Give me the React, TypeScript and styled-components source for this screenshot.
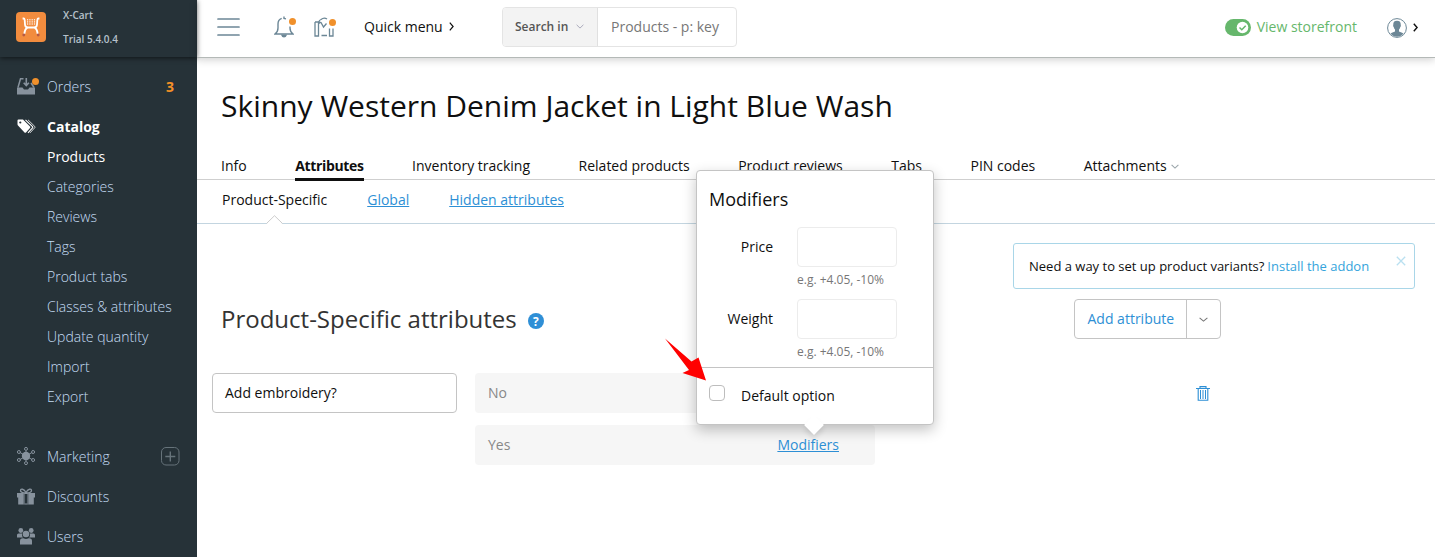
import React from 'react';
import styled, { createGlobalStyle, css } from 'styled-components';

const Global = createGlobalStyle`
  *, *::before, *::after { box-sizing: border-box; }
  body { margin: 0; background: #fff; overflow: hidden; }
  body, button, input { font-family: "Open Sans", "Noto Sans", sans-serif; font-size: 14px; color: #0f0f0f; }
  svg { display: block; flex: none; }
`;

const Page = styled.div`
  display: flex;
  width: 1435px;
  height: 557px;
  overflow: hidden;
`;

/* ---------- sidebar ---------- */
const Sidebar = styled.aside`
  flex: none;
  width: 197px;
  background: #263238;
`;
const Brand = styled.div`
  display: flex;
  align-items: flex-start;
  height: 57px;
  padding: 12px 0 0 16px;
  background: #263238;
  box-shadow: 0 1px 5px rgba(0, 0, 0, 0.6);
`;
const Logo = styled.div`
  display: flex;
  justify-content: center;
  align-items: center;
  width: 30px;
  height: 30px;
  border-radius: 4px;
  background: #f28c3e;
`;
const BrandText = styled.div`
  margin: -9px 0 0 17px;
  font-size: 10px;
  font-weight: 600;
  line-height: 24px;
  color: #b6c1cb;
`;
const Nav = styled.nav`
  display: flex;
  flex-direction: column;
  padding-top: 9px;
`;
const NavItem = styled.a<{ $active?: boolean; $gap?: boolean }>`
  display: flex;
  align-items: center;
  height: 40px;
  margin-top: ${(p) => (p.$gap ? '19px' : 0)};
  padding: 0 17px 0 16px;
  font-weight: ${(p) => (p.$active ? 700 : 300)};
  color: ${(p) => (p.$active ? '#fff' : '#c5ddf5')};
`;
const NavIcon = styled.span`
  position: relative;
  display: flex;
  justify-content: center;
  width: 20px;
  margin-right: 11px;
`;
const NavLabel = styled.span`
  flex: 1;
`;
const Count = styled.span`
  margin-right: 6px;
  font-weight: 700;
  color: #f59127;
`;
const SubNav = styled.div`
  display: flex;
  flex-direction: column;
  padding: 1px 0 0 47px;
`;
const SubItem = styled.a<{ $active?: boolean }>`
  height: 30px;
  line-height: 20px;
  font-weight: ${(p) => (p.$active ? 400 : 300)};
  color: ${(p) => (p.$active ? '#fff' : '#c5ddf5')};
`;
const Dot = styled.i<{ $top: number; $right: number }>`
  position: absolute;
  top: ${(p) => p.$top}px;
  right: ${(p) => p.$right}px;
  width: 7px;
  height: 7px;
  border-radius: 50%;
  background: #f0902b;
`;

/* ---------- header ---------- */
const Body = styled.div`
  flex: 1;
  min-width: 0;
`;
const Header = styled.header`
  display: flex;
  align-items: center;
  height: 58px;
  padding: 0 17px 3px 20px;
  border-bottom: 1px solid #b4b9b7;
  box-shadow: 0 2px 8px rgba(0, 0, 0, 0.18);
`;
const HeaderIcon = styled.span<{ $ml: number }>`
  position: relative;
  margin-left: ${(p) => p.$ml}px;
`;
const QuickMenu = styled.a`
  display: flex;
  align-items: center;
  gap: 6px;
  width: 91px;
  margin-left: 29px;
  padding-bottom: 2px;
`;
const Search = styled.div`
  display: flex;
  width: 235px;
  height: 40px;
  margin-left: 47px;
  border: 1px solid #e4e4e4;
  border-radius: 4px;
  overflow: hidden;
`;
const SearchIn = styled.div`
  display: flex;
  align-items: center;
  gap: 8px;
  width: 95px;
  padding: 0 0 1px 12px;
  border-right: 1px solid #e0e0e0;
  background: #f3f3f3;
  font-size: 12px;
  font-weight: 600;
  color: #555;
`;
const SearchField = styled.div`
  flex: 1;
  padding-left: 13px;
  line-height: 37px;
  color: #777;
`;
const Storefront = styled.a`
  display: flex;
  align-items: center;
  gap: 6px;
  margin-left: auto;
  margin-right: 30px;
  color: #66b76c;
`;
const StorefrontLabel = styled.span`
  padding-bottom: 1px;
`;
const Account = styled.div`
  display: flex;
  align-items: center;
  gap: 6px;
  padding-top: 1px;
`;

/* ---------- page title and tabs ---------- */
const Title = styled.h1`
  margin: 0;
  padding: 27px 0 0 24px;
  height: 96px;
  font-size: 30px;
  line-height: 42px;
  font-weight: 400;
`;
const Tabs = styled.div`
  display: flex;
  gap: 48.5px;
  height: 26px;
  padding-left: 24px;
  border-bottom: 1px solid #cfcfcf;
`;
const Tab = styled.a<{ $active?: boolean }>`
  display: flex;
  align-items: center;
  gap: 4px;
  height: 27px;
  padding-bottom: 3px;
  line-height: 20px;
  white-space: nowrap;
  ${(p) =>
    p.$active &&
    css`
      font-weight: 700;
      letter-spacing: -0.34px;
      border-bottom: 3px solid #0f0f0f;
      padding-bottom: 0;
    `}
`;
const SubTabs = styled.div`
  display: flex;
  gap: 40px;
  height: 44px;
  padding: 10px 0 0 25px;
  line-height: 20px;
  border-bottom: 1px solid #c3d5e0;
`;
const SubTab = styled.a<{ $active?: boolean }>`
  position: relative;
  color: ${(p) => (p.$active ? '#0f0f0f' : '#2d8fd5')};
  text-decoration: ${(p) => (p.$active ? 'none' : 'underline')};
`;
const Caret = styled.svg`
  position: absolute;
  left: 44px;
  top: 25px;
`;

/* ---------- content ---------- */
const Notice = styled.div`
  display: flex;
  align-items: center;
  width: 402px;
  height: 46px;
  margin: 19px 20px 0 auto;
  padding: 0 8px 0 15px;
  border: 1px solid #a9d6e8;
  border-radius: 3px;
  font-size: 13px;
  white-space: nowrap;
  a { margin-left: 3px; color: #35a4dc; }
  svg { margin: -11px 0 0 auto; }
`;
const SectionHead = styled.div`
  display: flex;
  align-items: center;
  height: 40px;
  margin-top: 10px;
  padding: 0 214px 0 24px;
`;
const SectionTitle = styled.h2`
  margin: 0 12px 0 0;
  padding-bottom: 2px;
  font-size: 24px;
  font-weight: 400;
  color: #333;
`;
const Help = styled.span`
  display: flex;
  align-items: center;
  justify-content: center;
  width: 16px;
  height: 16px;
  margin: 4px 0 0 -1px;
  border-radius: 50%;
  background: #2f8fd6;
  font-size: 12px;
  font-weight: 700;
  color: #fff;
`;
const SplitButton = styled.div`
  display: flex;
  width: 147px;
  height: 40px;
  margin-left: auto;
  border: 1px solid #c4c4c4;
  border-radius: 4px;
`;
const SplitMain = styled.a`
  width: 112px;
  padding-left: 12.5px;
  border-right: 1px solid #c4c4c4;
  line-height: 38px;
  font-weight: 500;
  color: #2d8fd5;
`;
const SplitMore = styled.span`
  display: flex;
  flex: 1;
  align-items: center;
  justify-content: center;
`;
const Attribute = styled.div`
  display: flex;
  align-items: flex-start;
  margin-top: 34px;
  padding: 0 225px 0 15px;
`;
const NameInput = styled.div`
  width: 245px;
  height: 40px;
  padding-left: 12px;
  border: 1px solid #c4c4c4;
  border-radius: 4px;
  line-height: 38px;
`;
const Options = styled.div`
  display: flex;
  flex-direction: column;
  gap: 12px;
  margin-left: 18px;
`;
const Option = styled.div`
  position: relative;
  display: flex;
  justify-content: space-between;
  align-items: center;
  width: 400px;
  height: 40px;
  padding: 0 36px 2px 13px;
  border-radius: 4px;
  background: #f6f6f6;
  color: #888;
`;
const ModLink = styled.a`
  color: #2d8fd5;
  text-decoration: underline;
`;
const Remove = styled.span`
  margin: 13px 0 0 auto;
`;

/* ---------- modifiers popover ---------- */
const Popover = styled.div`
  position: absolute;
  z-index: 2;
  left: 221px;
  bottom: 40px;
  width: 238px;
  height: 255px;
  border: 1px solid #c4c4c4;
  border-radius: 4px;
  background: #fff;
  color: #0f0f0f;
  box-shadow: 0 5px 14px rgba(0, 0, 0, 0.24);
`;
const PopTitle = styled.div`
  height: 56px;
  padding: 15px 0 0 12px;
  font-size: 18px;
  line-height: 26px;
`;
const Field = styled.div`
  display: flex;
  height: 72px;
`;
const FieldLabel = styled.label`
  width: 76px;
  line-height: 40px;
  text-align: right;
`;
const FieldBody = styled.div`
  margin-left: 24px;
`;
const FieldInput = styled.div`
  width: 100px;
  height: 40px;
  border: 1px solid #ececec;
  border-radius: 4px;
`;
const Hint = styled.div`
  margin-top: 5px;
  font-size: 12px;
  line-height: 16px;
  color: #777;
`;
const DefaultRow = styled.div`
  display: flex;
  height: 57px;
  margin-top: -4px;
  padding: 17px 0 0 12px;
  border-top: 1px solid #c4c4c4;
  gap: 16px;
`;
const Checkbox = styled.span`
  width: 16px;
  height: 16px;
  border: 1px solid #bdbdbd;
  border-radius: 4px;
`;
const DefaultLabel = styled.span`
  line-height: 22px;
`;
const Tip = styled.i`
  position: absolute;
  left: 110px;
  bottom: -8px;
  width: 14px;
  height: 14px;
  background: #fff;
  transform: rotate(45deg);
  box-shadow: 3px 3px 5px rgba(0, 0, 0, 0.1);
`;
const Pointer = styled.svg`
  position: absolute;
  left: -34px;
  top: 166px;
`;

const Chevron = ({ w, h, color, sw = 1.1 }: { w: number; h: number; color: string; sw?: number }) => (
  <svg width={w} height={h} viewBox={`0 0 ${w} ${h}`} fill="none" stroke={color} strokeWidth={sw}>
    {w > h ? <path d={`M.6 .8 L${w / 2} ${h - 0.9} L${w - 0.6} .8`} /> : <path d={`M.8 .7 L${w - 0.9} ${h / 2} L.8 ${h - 0.7}`} />}
  </svg>
);

const CartLogo = () => (
  <svg width="20" height="20" viewBox="0 0 20 20" fill="none" stroke="#fff">
    <path d="M1.600 1.500h1c.9 0 1 .6 1.100 1.600l.3 4.400q.2 3 2.800 3h6.400q2.600 0 2.800-3l.3-4.400c.1-1 .2-1.600 1.100-1.600h1" strokeWidth="1.800" />
    <path d="M6.500 10.500Q4 11.500 3.300 17M13.500 10.500q2.500 1 3.200 6.500" strokeWidth="1.900" />
    <g fill="#fff" stroke="none">
      {[2.2, 4.3, 6.4].map((y) => [6, 8.300, 10.600, 12.900].map((x) => <rect key={`${x}-${y}`} x={x} y={y} width="1.200" height="1.200" />))}
    </g>
    <circle cx="2.800" cy="18" r="1.400" fill="#b65a45" stroke="none" />
    <circle cx="17.200" cy="18" r="1.400" fill="#b65a45" stroke="none" />
  </svg>
);

const OrdersIcon = () => (
  <svg width="18" height="17" viewBox="0 0 18 17">
    <path d="M0 9.500h5.500l1.500 2h4l1.500-2H18v7H0z" fill="#87929d" />
    <path d="M1 9.500 3.500.8h3M14 5l3 4.500" fill="none" stroke="#87929d" strokeWidth="1.500" />
    <path d="M9.300 0v6.500M6.700 4.800 9.300 7.500l2.600-2.700" fill="none" stroke="#87929d" strokeWidth="1.600" />
  </svg>
);
const TagsIcon = () => (
  <svg width="19" height="15" viewBox="0 0 19 15">
    <path d="M.500 1.500Q.500.500 1.500.500H6L13 7.500q.7.800 0 1.500L9 13.500q-.8.700-1.500 0L1 6.500Q.500 6 .5 5z" fill="#fff" />
    <circle cx="3.300" cy="3.500" r="1.100" fill="#263238" />
    <path d="M8.500 .8 15.500 7.700q.6.600 0 1.200L11 13.900" fill="none" stroke="#fff" strokeWidth="1.100" />
    <path d="M11 .8 17.800 7.500q.6.600 0 1.200L13 13.900" fill="none" stroke="#fff" strokeWidth=".8" />
  </svg>
);
const MarketingIcon = () => (
  <svg width="18" height="18" viewBox="0 0 18 18" fill="none" stroke="#87929d">
    <circle cx="9" cy="9" r="4.200" fill="#87929d" stroke="none" />
    <path d="M9 4v10M3 5.500l12 7M3 12.500l12-7" />
    {[[9, 1.900], [9, 16.100], [1.900, 5], [16.100, 5], [1.900, 13], [16.100, 13]].map(([x, y]) => (
      <circle key={`${x}-${y}`} cx={x} cy={y} r="1.500" fill="#263238" />
    ))}
  </svg>
);
const GiftIcon = () => (
  <svg width="18" height="17" viewBox="0 0 18 17" fill="#87929d">
    <path d="M0 5h6.500v4.500H0zM11.500 5H18v4.500h-6.500zM1.200 9h5.300v7.500H1.200zM11.500 9h5.300v7.500h-5.300zM7.500 5h3v1h-3zM7.500 15.500h3v1h-3z" />
    <path d="M9 5C7 5 3.500 4.500 3.500 2.500S7 .5 9 4.500c2-4 5.500-4 5.500-2S11 5 9 5z" fill="none" stroke="#87929d" strokeWidth="1.300" />
    <path d="M6.500 5h1v11.500h-1zM10.500 5h1v11.500h-1z" />
  </svg>
);
const UsersIcon = () => (
  <svg width="18" height="17" viewBox="0 0 18 17" fill="#87929d">
    <circle cx="3.800" cy="2.500" r="2.400" />
    <circle cx="14.200" cy="2.500" r="2.400" />
    <path d="M0 9.500V7q0-1.500 1.500-1.500H5Q4.600 8 6 9.500zM18 9.500V7q0-1.500-1.500-1.500H13q.4 2.500-1 4z" />
    <circle cx="9" cy="6" r="3.300" />
    <path d="M3 16.500V13q0-2.700 2.700-2.700h.8q2.500 1.500 5 0h.8q2.700 0 2.700 2.700v3.500z" />
  </svg>
);
const PlusBox = () => (
  <svg width="19" height="19" viewBox="0 0 19 19" fill="none" stroke="#66737a">
    <rect x=".5" y=".5" width="17.500" height="17.500" rx="4.500" />
    <path d="M9.300 4.500v10M4.300 9.500h10" strokeWidth="1.400" />
  </svg>
);
const Burger = () => (
  <svg width="23" height="18" viewBox="0 0 23 18" stroke="#6c8796" strokeWidth="1.700" strokeLinecap="round">
    <path d="M1 1h21M1 9h21M1 17h21" />
  </svg>
);
const Bell = () => (
  <svg width="20" height="22" viewBox="0 0 20 22" fill="none" stroke="#6c8796" strokeWidth="1.400">
    <path d="M7.700 2.400C5 3.300 4 5.300 4 8v4c0 3-.7 4.500-3 6h18c-2.300-1.500-3-3-3-6v-1.500" />
    <path d="M10 .5v2l2 .4M8 19.300c.5 2 3.500 2 4 0z" />
  </svg>
);
const MapBag = () => (
  <svg width="21" height="20" viewBox="0 0 21 20" fill="none" stroke="#6c8796" strokeWidth="1.300">
    <path d="M1 5v14h3.500V5H1M15.500 11.500V19H19v-7.500M7.500 18.500H13" />
    <path d="M5 7V4.500q.5-1.500 2-2Q10 0 13 2M4.500 5l2.500.5L9.500 10l3-3.500" />
  </svg>
);
const Toggle = () => (
  <svg width="26" height="17" viewBox="0 0 26 17">
    <rect width="26" height="17" rx="8.500" fill="#66b76c" />
    <circle cx="17.500" cy="8.500" r="5.800" fill="#fff" />
    <path d="m14.500 8.500 2.300 2.300 3.900-4" fill="none" stroke="#66b76c" strokeWidth="1.500" />
  </svg>
);
const Avatar = () => (
  <svg width="20" height="20" viewBox="0 0 20 20">
    <circle cx="10" cy="10" r="9.400" fill="#fff" stroke="#6c8796" strokeWidth="1" />
    <path d="M6.300 7C6 4 7.500 2.800 10 2.800S14 4 13.700 7c.4.500.1 1.700-.4 2-.2 1.200-.7 2-1.300 2.600v1.900c1.500.8 3.600 1 4.500 2.300a8.700 8.700 0 0 1-13 0C4.400 14.500 6.500 14.300 8 13.500v-1.900C7.400 11 6.900 10.200 6.700 9c-.5-.3-.8-1.500-.4-2z" fill="#6c8796" />
  </svg>
);
const Trash = () => (
  <svg width="14" height="15" viewBox="0 0 14 15" fill="none" stroke="#2d8fd5">
    <path d="M0 2.500h14M4 2.500V.6h6v1.900M2.200 3v11.300h9.600V3" strokeWidth="1.100" />
    <path d="M4.500 4v9M7 4v9M9.500 4v9" strokeWidth="1" />
  </svg>
);

const catalogItems = ['Products', 'Categories', 'Reviews', 'Tags', 'Product tabs', 'Classes & attributes', 'Update quantity', 'Import', 'Export'];
const tabs = ['Info', 'Attributes', 'Inventory tracking', 'Related products', 'Product reviews', 'Tabs', 'PIN codes', 'Attachments'];

const ModifierField = ({ label }: { label: string }) => (
  <Field>
    <FieldLabel>{label}</FieldLabel>
    <FieldBody>
      <FieldInput />
      <Hint>e.g. +4.05, -10%</Hint>
    </FieldBody>
  </Field>
);

export default function App() {
  return (
    <Page>
      <Global />
      <Sidebar>
        <Brand>
          <Logo><CartLogo /></Logo>
          <BrandText>X-Cart<br />Trial 5.4.0.4</BrandText>
        </Brand>
        <Nav>
          <NavItem>
            <NavIcon><OrdersIcon /><Dot $top={0} $right={-3} /></NavIcon>
            <NavLabel>Orders</NavLabel>
            <Count>3</Count>
          </NavItem>
          <NavItem $active>
            <NavIcon><TagsIcon /></NavIcon>
            <NavLabel>Catalog</NavLabel>
          </NavItem>
          <SubNav>
            {catalogItems.map((t) => <SubItem key={t} $active={t === 'Products'}>{t}</SubItem>)}
          </SubNav>
          <NavItem $gap>
            <NavIcon><MarketingIcon /></NavIcon>
            <NavLabel>Marketing</NavLabel>
            <PlusBox />
          </NavItem>
          <NavItem>
            <NavIcon><GiftIcon /></NavIcon>
            <NavLabel>Discounts</NavLabel>
          </NavItem>
          <NavItem>
            <NavIcon><UsersIcon /></NavIcon>
            <NavLabel>Users</NavLabel>
          </NavItem>
        </Nav>
      </Sidebar>
      <Body>
        <Header>
          <Burger />
          <HeaderIcon $ml={34}><Bell /><Dot $top={2} $right={-2} /></HeaderIcon>
          <HeaderIcon $ml={20}><MapBag /><Dot $top={2} $right={-1} /></HeaderIcon>
          <QuickMenu>Quick menu <Chevron w={5} h={9} color="#0f0f0f" sw={1.2} /></QuickMenu>
          <Search>
            <SearchIn>Search in <Chevron w={8} h={5} color="#aab" sw={1} /></SearchIn>
            <SearchField>Products - p: key</SearchField>
          </Search>
          <Storefront><Toggle /><StorefrontLabel>View storefront</StorefrontLabel></Storefront>
          <Account><Avatar /><Chevron w={5} h={9} color="#0f0f0f" sw={1.4} /></Account>
        </Header>
        <Title>Skinny Western Denim Jacket in Light Blue Wash</Title>
        <Tabs>
          {tabs.map((t) => (
            <Tab key={t} $active={t === 'Attributes'}>
              {t}
              {t === 'Attachments' && <Chevron w={8} h={5} color="#9aa5aa" />}
            </Tab>
          ))}
        </Tabs>
        <SubTabs>
          <SubTab $active>
            Product-Specific
            <Caret width="17" height="10" viewBox="0 0 17 10">
              <path d="M.5 9 8.500 1l8 8v1H.5z" fill="#fff" />
              <path d="M.5 8.500 8.500 .7l8 7.800" fill="none" stroke="#ccc" strokeWidth="1" />
            </Caret>
          </SubTab>
          <SubTab>Global</SubTab>
          <SubTab>Hidden attributes</SubTab>
        </SubTabs>
        <Notice>
          Need a way to set up product variants? <a>Install the addon</a>
          <svg width="10" height="10" viewBox="0 0 10 10" stroke="#b9e0f0" strokeWidth="1.300"><path d="m.8.800 8.400 8.400M9.200.8.800 9.200" /></svg>
        </Notice>
        <SectionHead>
          <SectionTitle>Product-Specific attributes</SectionTitle>
          <Help>?</Help>
          <SplitButton>
            <SplitMain>Add attribute</SplitMain>
            <SplitMore><Chevron w={9} h={5} color="#777" sw={1.1} /></SplitMore>
          </SplitButton>
        </SectionHead>
        <Attribute>
          <NameInput>Add embroidery?</NameInput>
          <Options>
            <Option>No</Option>
            <Option>
              Yes
              <ModLink>Modifiers</ModLink>
              <Popover>
                <PopTitle>Modifiers</PopTitle>
                <ModifierField label="Price" />
                <ModifierField label="Weight" />
                <DefaultRow>
                  <Checkbox />
                  <DefaultLabel>Default option</DefaultLabel>
                </DefaultRow>
                <Tip />
                <Pointer width="44" height="45" viewBox="0 0 44 45">
                  <path d="M2 1.500 28.500 24.500 35.500 20.500 43 43.500 19.500 36 26 33z" fill="#f00" />
                </Pointer>
              </Popover>
            </Option>
          </Options>
          <Remove><Trash /></Remove>
        </Attribute>
      </Body>
    </Page>
  );
}
